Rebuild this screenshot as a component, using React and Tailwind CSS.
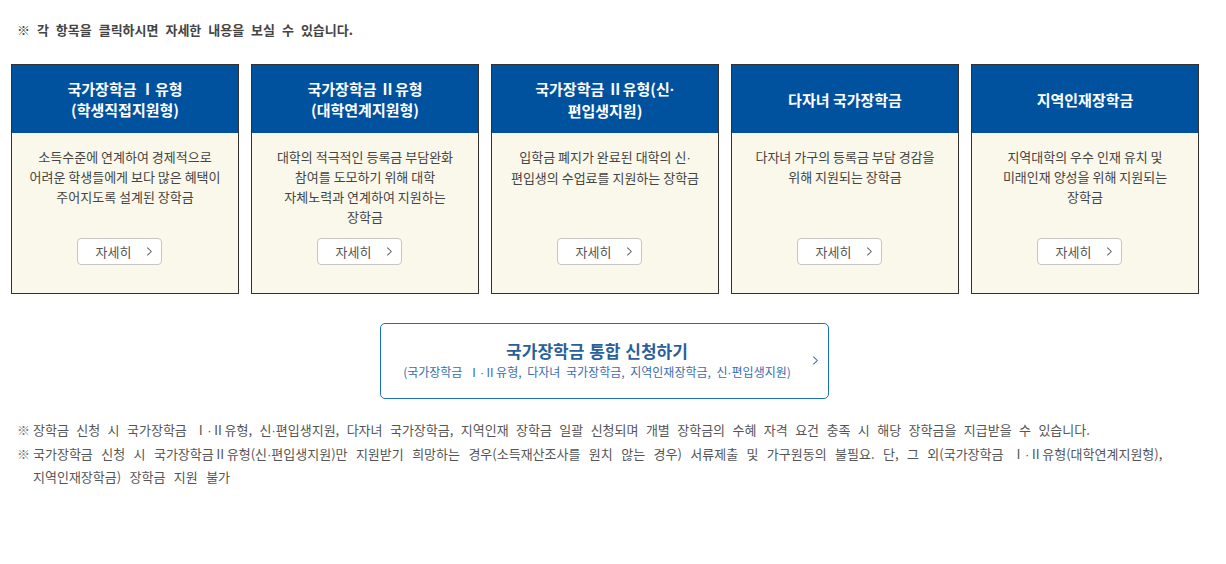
import React from 'react';

const cards = [
  {
    title: ['국가장학금 Ⅰ유형', '(학생직접지원형)'],
    desc: ['소득수준에 연계하여 경제적으로', '어려운 학생들에게 보다 많은 혜택이', '주어지도록 설계된 장학금'],
  },
  {
    title: ['국가장학금 Ⅱ유형', '(대학연계지원형)'],
    desc: ['대학의 적극적인 등록금 부담완화', '참여를 도모하기 위해 대학', '자체노력과 연계하여 지원하는', '장학금'],
  },
  {
    title: ['국가장학금 Ⅱ유형(신·', '편입생지원)'],
    desc: ['입학금 폐지가 완료된 대학의 신·', '편입생의 수업료를 지원하는 장학금'],
  },
  {
    title: ['다자녀 국가장학금'],
    desc: ['다자녀 가구의 등록금 부담 경감을', '위해 지원되는 장학금'],
  },
  {
    title: ['지역인재장학금'],
    desc: ['지역대학의 우수 인재 유치 및', '미래인재 양성을 위해 지원되는', '장학금'],
  },
];

// middle dot in the CJK font is full width, so render it narrow
function Dots({ text }) {
  const parts = text.split('·');
  return parts.map((p, i) => (
    <React.Fragment key={i}>
      {p}
      {i < parts.length - 1 && <span className="font-['Liberation_Sans',sans-serif]">·</span>}
    </React.Fragment>
  ));
}

function Chevron({ className }) {
  return (
    <svg viewBox="0 0 8 12" className={className} fill="none" stroke="currentColor" strokeWidth="1.2">
      <path d="M1.5 1.5 L6 6 L1.5 10.5" />
    </svg>
  );
}

function Card({ item }) {
  return (
    <div className="flex flex-col w-[228px] h-[230px] border border-[#333]">
      <div className="h-[68px] bg-[#00529f] flex flex-col items-center justify-center text-white font-bold text-[15px] leading-[21px] text-center">
        {item.title.map((t, i) => (
          <p key={i}><Dots text={t} /></p>
        ))}
      </div>
      <div className="flex-1 bg-[#faf8ea] flex flex-col items-center pt-[14px] pb-[28px]">
        <div className="text-[13px] leading-[20px] text-[#444] text-center">
          {item.desc.map((d, i) => (
            <p key={i}><Dots text={d} /></p>
          ))}
        </div>
        <button className="mt-auto mr-[12px] w-[85px] h-[27px] bg-white border border-[#c6c6c6] rounded-[4px] flex items-center gap-[15px] pl-[18px] text-[13px] text-[#555]">
          <span>자세히</span>
          <Chevron className="w-[7px] h-[11px] text-[#666]" />
        </button>
      </div>
    </div>
  );
}

export default function App() {
  return (
    <div className="w-[1226px] h-[564px] bg-white font-['Noto_Sans_CJK_KR',sans-serif] text-[#333]">
      <p className="pt-[19px] pl-[17px] text-[13px] leading-[22px] font-bold text-[#444] [word-spacing:4px]">
        ※ 각 항목을 클릭하시면 자세한 내용을 보실 수 있습니다.
      </p>

      <div className="flex gap-[12px] pl-[11px] mt-[23px]">
        {cards.map((c, i) => (
          <Card key={i} item={c} />
        ))}
      </div>

      <div className="flex justify-center mt-[29px] pr-[18px]">
        <button className="relative w-[449px] h-[76px] border border-[#1c6fc1] rounded-[5px] flex flex-col items-center justify-center bg-white pr-[14px]">
          <span className="text-[17px] leading-[22px] font-bold text-[#2b5f9b] [word-spacing:1px]">국가장학금 통합 신청하기</span>
          <span className="text-[12px] leading-[18px] text-[#3a6db0] mt-[1px] [word-spacing:3px]">
            <Dots text="(국가장학금 Ⅰ·Ⅱ유형, 다자녀 국가장학금, 지역인재장학금, 신·편입생지원)" />
          </span>
          <Chevron className="absolute right-[9px] top-[31px] w-[7px] h-[11px] text-[#3a6db0]" />
        </button>
      </div>

      <div className="mt-[20px] pl-[17px] text-[13px] leading-[22.5px] text-[#555]">
        <p className="flex [word-spacing:4.5px]">
          <span className="w-[16px] shrink-0 text-[#777]">※</span>
          <span>
            <Dots text="장학금 신청 시 국가장학금 Ⅰ·Ⅱ유형, 신·편입생지원, 다자녀 국가장학금, 지역인재 장학금 일괄 신청되며 개별 장학금의 수혜 자격 요건 충족 시 해당 장학금을 지급받을 수 있습니다." />
          </span>
        </p>
        <p className="flex [word-spacing:5.5px]">
          <span className="w-[16px] shrink-0 text-[#777]">※</span>
          <span className="w-[1190px]">
            <Dots text="국가장학금 신청 시 국가장학금Ⅱ유형(신·편입생지원)만 지원받기 희망하는 경우(소득재산조사를 원치 않는 경우) 서류제출 및 가구원동의 불필요. 단, 그 외(국가장학금 Ⅰ·Ⅱ유형(대학연계지원형)," />
            <br />
            지역인재장학금) 장학금 지원 불가
          </span>
        </p>
      </div>
    </div>
  );
}
